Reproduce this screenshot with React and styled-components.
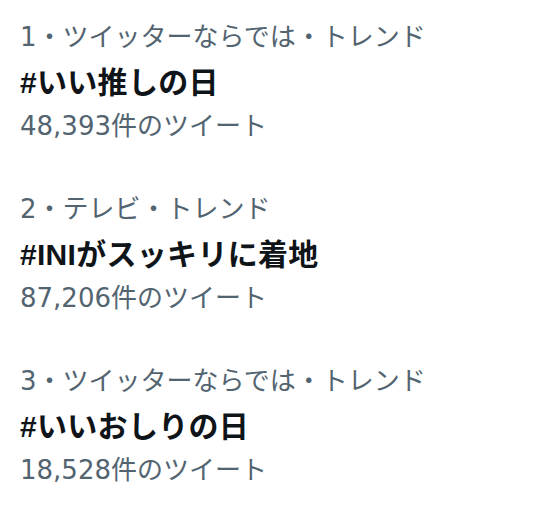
import React from 'react'
import styled, { createGlobalStyle } from 'styled-components'

const GlobalStyle = createGlobalStyle`
  html, body {
    margin: 0;
    padding: 0;
    background: #ffffff;
  }
  body {
    font-family: "DejaVu Sans", "Noto Sans CJK JP", sans-serif;
  }
`

const trends = [
  { rank: 1, category: 'ツイッターならでは・トレンド', name: '#いい推しの日', count: '48,393' },
  { rank: 2, category: 'テレビ・トレンド', name: '#INIがスッキリに着地', count: '87,206' },
  { rank: 3, category: 'ツイッターならでは・トレンド', name: '#いいおしりの日', count: '18,528' },
]

const TrendList = styled.div`
  display: flex;
  flex-direction: column;
  padding: 15px 20px 0;
  gap: 39px;
`

const Trend = styled.div`
  display: flex;
  flex-direction: column;
`

const Meta = styled.div`
  color: #536471;
  font-size: 26px;
  line-height: 44px;
`

const Title = styled.div`
  color: #0f1419;
  font-family: "Liberation Sans", "Noto Sans CJK JP", sans-serif;
  font-size: 30px;
  font-weight: 700;
  line-height: 42px;
  letter-spacing: 0.3px;
  padding-top: 3px;
`

export default function App() {
  return (
    <>
      <GlobalStyle />
      <TrendList>
        {trends.map(t => (
          <Trend key={t.rank}>
            <Meta>{t.rank}・{t.category}</Meta>
            <Title>{t.name}</Title>
            <Meta>{t.count}件のツイート</Meta>
          </Trend>
        ))}
      </TrendList>
    </>
  )
}
